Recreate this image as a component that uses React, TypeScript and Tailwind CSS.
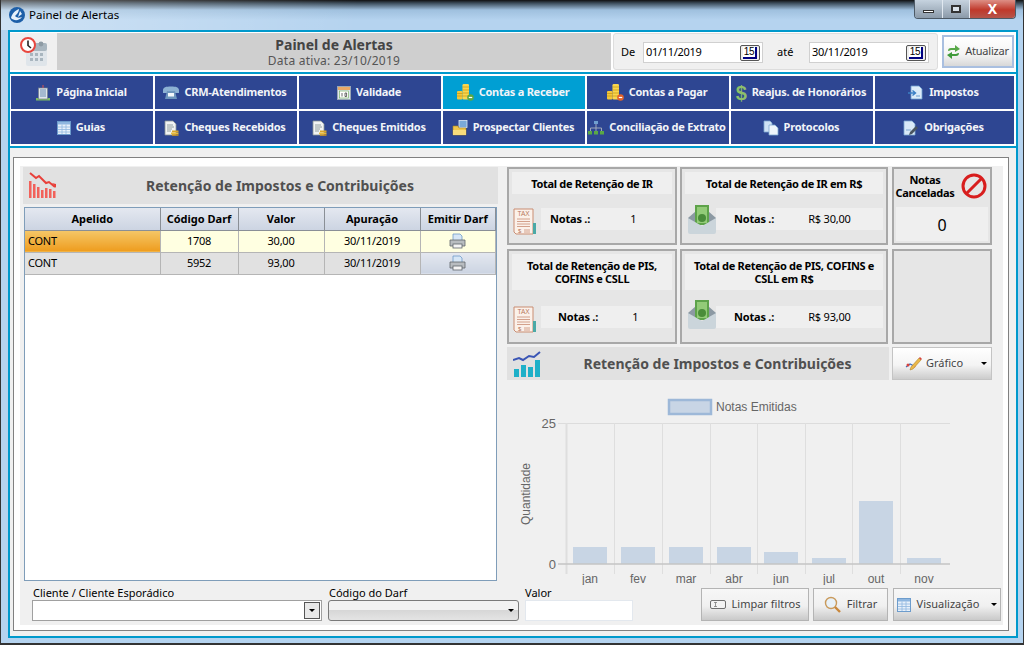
import type { ReactNode } from 'react'

type IconProps = { className?: string }

function AppLogo() {
  return (
    <svg width="18" height="18" viewBox="0 0 18 18">
      <circle cx="9" cy="9" r="8" fill="#1d5fa8" />
      <path d="M3 12c3 3 8 3 11-1-3 1-5 1-7-1 2-2 4-4 4-7C8 4 4 7 3 12z" fill="#e8f1fa" />
      <path d="M12 5l2 3-4 3z" fill="#e8f1fa" />
    </svg>
  )
}

function ClockCalendar() {
  return (
    <svg width="30" height="30" viewBox="0 0 30 30">
      <rect x="7" y="6" width="21" height="23" rx="2" fill="#dfe5ea" />
      <rect x="7" y="6" width="21" height="8" rx="2" fill="#a9b6bf" />
      <circle cx="22" cy="7" r="2.4" fill="#8e9ba4" />
      <g fill="#a9b6bf">
        <rect x="11" y="16" width="3" height="3" />
        <rect x="16" y="16" width="3" height="3" />
        <rect x="21" y="16" width="3" height="3" />
        <rect x="11" y="21" width="3" height="3" />
        <rect x="16" y="21" width="3" height="3" />
        <rect x="21" y="21" width="3" height="3" />
      </g>
      <circle cx="9" cy="8" r="7" fill="#fff" stroke="#e8473f" strokeWidth="2" />
      <path d="M9 3.5V8.5L12 11" fill="none" stroke="#222" strokeWidth="1.6" />
    </svg>
  )
}

function BuildingIcon() {
  return (
    <svg width="16" height="16" viewBox="0 0 16 16">
      <rect x="1" y="13" width="14" height="2.500" fill="#7dbb62" />
      <rect x="3.500" y="3" width="9" height="11" fill="#dfe5ea" stroke="#75808c" strokeWidth=".7" />
      <path d="M5 5h6M5 7h6M5 9h6M5 11h6" stroke="#6a8db5" strokeWidth="1" />
      <path d="M8 0v3" stroke="#d9534f" />
    </svg>
  )
}

function PhoneIcon() {
  return (
    <svg width="16" height="14" viewBox="0 0 16 14">
      <path d="M0 4.500C0 1 3 .5 8 .5s8 .5 8 4V7h-4V5H4v2H0z" fill="#8db1d3" />
      <path d="M2 13l2-8h8l2 8z" fill="#6f96bd" />
      <rect x="5" y="7" width="6" height="3.500" fill="#f4f8fb" />
    </svg>
  )
}

function CalendarIcon() {
  return (
    <svg width="14" height="14" viewBox="0 0 14 14">
      <rect x=".5" y=".5" width="13" height="13" fill="#dfe7ef" stroke="#9aa7b5" />
      <rect x="1" y="1" width="12" height="3" fill="#e9a866" />
      <rect x="2.500" y="5" width="9" height="7" fill="#fff" stroke="#6aa84f" strokeWidth=".6" />
      <path d="M5 7v3.500M8 7h1.600v3.500H8z" fill="none" stroke="#444" strokeWidth=".8" />
    </svg>
  )
}

function CoinsIcon({ badge }: { badge: string }) {
  return (
    <svg width="17" height="17" viewBox="0 0 17 17">
      <rect x="0" y="7" width="5.500" height="8.500" rx="1" fill="#f2c63a" />
      <rect x="5.500" y="0" width="6.500" height="15.500" rx="1.200" fill="#f8d64e" />
      <path d="M0 9.500h5.500M0 12h5.500M5.500 3h6.500M5.500 6h6.500M5.500 9h6.500M5.500 12h6.500" stroke="#c39516" strokeWidth=".7" />
      <circle cx="13.500" cy="13.500" r="3.300" fill={badge} />
      <path d="M11.800 13.500h3.400" stroke="#fff" strokeWidth="1.200" />
    </svg>
  )
}

function DocArrowIcon() {
  return (
    <svg width="16" height="15" viewBox="0 0 16 15">
      <path d="M3 1h8l3 3v10H3z" fill="#dcebf8" stroke="#6f9fd0" strokeWidth=".8" />
      <path d="M0 8h7M4.500 5.500L7.500 8l-3 2.500" fill="none" stroke="#3b7fc4" strokeWidth="1.400" />
      <path d="M8 11h4" stroke="#6f9fd0" />
    </svg>
  )
}

function GridIcon({ className }: IconProps) {
  return (
    <svg className={className} width="14" height="14" viewBox="0 0 14 14">
      <rect x=".5" y=".5" width="13" height="13" fill="#e8f1fa" stroke="#6d9ccc" />
      <rect x="1" y="1" width="12" height="2.500" fill="#8fb7e0" />
      <path d="M1 6h12M1 8.500h12M1 11h12M5 3.500V13M9 3.500V13" stroke="#8fb7e0" strokeWidth=".8" />
    </svg>
  )
}

function ChequeIcon() {
  return (
    <svg width="15" height="16" viewBox="0 0 15 16">
      <path d="M1 1h8l3 3v11H1z" fill="#f1f3f3" stroke="#8b9496" strokeWidth=".8" />
      <path d="M3 5h6M3 7h7M3 9h5M3 11h4" stroke="#7c8a8c" strokeWidth=".8" />
      <rect x="8" y="10.500" width="6.500" height="1.800" fill="#d9a52a" />
      <rect x="7" y="12.500" width="7.500" height="1.800" fill="#e9bb3c" />
      <rect x="8" y="14.300" width="6.500" height="1.500" fill="#c99320" />
    </svg>
  )
}

function FolderIcon() {
  return (
    <svg width="16" height="16" viewBox="0 0 16 16">
      <rect x="7" y="0.500" width="8" height="7" fill="#7aa9d8" stroke="#dce8f4" strokeWidth=".8" />
      <path d="M1 6h5l1 2h7v7H1z" fill="#f0c64a" stroke="#a9831f" strokeWidth=".6" />
      <path d="M1 10h13v5H1z" fill="#f8dc7b" />
    </svg>
  )
}

function TreeIcon() {
  return (
    <svg width="16" height="14" viewBox="0 0 16 14">
      <rect x="6" y="0" width="4" height="3" fill="#6f9fd0" />
      <path d="M8 3v4M2.500 10V7h11v3M8 7v3" fill="none" stroke="#aab2bc" strokeWidth=".9" />
      <rect x="0" y="10" width="4" height="3.500" fill="#5aa845" />
      <rect x="6" y="10" width="4" height="3.500" fill="#5aa845" />
      <rect x="12" y="10" width="4" height="3.500" fill="#5aa845" />
    </svg>
  )
}

function CopiesIcon() {
  return (
    <svg width="16" height="16" viewBox="0 0 16 16">
      <path d="M1 1h6l2 2v9H1z" fill="#cfe2f5" stroke="#7ea8d2" strokeWidth=".8" />
      <path d="M6 5h6l3 3v7H6z" fill="#eef5fc" stroke="#7ea8d2" strokeWidth=".8" />
    </svg>
  )
}

function DocPenIcon() {
  return (
    <svg width="16" height="16" viewBox="0 0 16 16">
      <path d="M1 1h8l3 3v11H1z" fill="#d9e9f8" stroke="#7ea8d2" strokeWidth=".8" />
      <path d="M3 10h5" stroke="#7ea8d2" />
      <path d="M6 15l1-3 6-6 2 2-6 6z" fill="#4a5560" />
    </svg>
  )
}

function RefreshArrows() {
  return (
    <svg width="13" height="14" viewBox="0 0 13 14">
      <path d="M1 6c0-2 1-3 3-3h4V0l5 4-5 3V5H5C4 5 3 5.500 1 6z" fill="#58a848" />
      <path d="M12 8c0 2-1 3-3 3H5v3L0 10l5-3v2h3c1 0 2-.5 4-1z" fill="#3f9a3a" />
    </svg>
  )
}

function TrendDownIcon() {
  return (
    <svg width="28" height="28" viewBox="0 0 28 28">
      <path d="M1 1l6 5 3-2 7 7 3-1 6 5" fill="none" stroke="#e8403a" strokeWidth="2" />
      <path d="M23 11l4 1v4z" fill="#e8403a" />
      <g fill="#f2615a">
        <rect x="0" y="9" width="2.500" height="17" />
        <rect x="4" y="12" width="2.500" height="14" />
        <rect x="8" y="15" width="2.500" height="11" />
        <rect x="12" y="18" width="2.500" height="8" />
        <rect x="16" y="16" width="2.500" height="10" />
        <rect x="20" y="17" width="2.500" height="9" />
        <rect x="24" y="19" width="2.500" height="7" />
      </g>
    </svg>
  )
}

function TrendUpIcon() {
  return (
    <svg width="28" height="26" viewBox="0 0 28 26">
      <path d="M0 9l6-2 4 2 6-4 5 1 6-5" fill="none" stroke="#3a55b5" strokeWidth="2" />
      <g fill="#1eb0c8">
        <rect x="1" y="18" width="5" height="8" />
        <rect x="8" y="14" width="5" height="12" />
        <rect x="15" y="16" width="5" height="10" />
        <rect x="22" y="9" width="5" height="17" />
      </g>
    </svg>
  )
}

function TaxDocIcon() {
  return (
    <svg width="24" height="28" viewBox="0 0 24 28">
      <path d="M1 1h19v25H3l-2-2z" fill="#fbf1ea" stroke="#c98d73" strokeWidth="1" />
      <rect x="20" y="15" width="3" height="11" fill="#4aa9a6" />
      <text x="10.500" y="8" textAnchor="middle" fontSize="6.500" fill="#b7765b" fontFamily="Liberation Sans">TAX</text>
      <path d="M4 11h13M4 13.500h13M4 16h13M4 18.500h13M11 22h6M11 24h6" stroke="#c98d73" strokeWidth=".8" />
      <text x="5" y="25" fontSize="6" fill="#b7765b" fontFamily="Liberation Sans">$</text>
    </svg>
  )
}

function MoneyEnvelopeIcon() {
  return (
    <svg width="28" height="29" viewBox="0 0 28 29">
      <path d="M0 13L8 6h12l8 7v6H0z" fill="#8c99a3" />
      <rect x="7" y="0" width="14" height="20" fill="#5ea34a" />
      <rect x="9" y="2" width="10" height="16" fill="#93cb78" />
      <circle cx="14" cy="13" r="4" fill="#4a8c3a" />
      <path d="M0 13l14 8 14-8v14a2 2 0 0 1-2 2H2a2 2 0 0 1-2-2z" fill="#cbd5db" />
    </svg>
  )
}

function ForbiddenIcon() {
  return (
    <svg width="26" height="26" viewBox="0 0 26 26">
      <circle cx="13" cy="13" r="11" fill="none" stroke="#d81e1e" strokeWidth="3" />
      <path d="M5.500 20.500L20.500 5.500" stroke="#d81e1e" strokeWidth="3" />
    </svg>
  )
}

function PrinterIcon() {
  return (
    <svg width="17" height="16" viewBox="0 0 17 16">
      <path d="M4 1h7l2 2v5H4z" fill="#d6e6f6" stroke="#6f9bc8" strokeWidth=".8" />
      <path d="M1 7h15v6H1z" fill="#b8bcc0" stroke="#5f656b" strokeWidth=".8" />
      <rect x="4" y="11" width="9" height="4" fill="#f4f4f4" stroke="#5f656b" strokeWidth=".8" />
    </svg>
  )
}

function PencilChartIcon() {
  return (
    <svg width="18" height="17" viewBox="0 0 18 17">
      <path d="M1 12l4-3 4 2 6-7" fill="none" stroke="#3a6cc0" strokeWidth="1.200" />
      <circle cx="3" cy="10" r="1.500" fill="#d9413b" />
      <circle cx="9" cy="11" r="1.500" fill="#d9413b" />
      <path d="M5 15l1-3 8-9 2 2-8 9z" fill="#eab84a" stroke="#a87a1c" strokeWidth=".5" />
      <path d="M14 3l1-1 2 2-1 1z" fill="#d9413b" />
    </svg>
  )
}

function EraserIcon() {
  return (
    <svg width="16" height="10" viewBox="0 0 16 10">
      <rect x=".5" y=".5" width="15" height="8" rx="1.500" fill="#f3f3f3" stroke="#6f6f6f" />
      <path d="M4 2.500h3M5.500 2.500v4M4 6.500h3" stroke="#6f6f6f" strokeWidth=".7" />
    </svg>
  )
}

function MagnifierIcon() {
  return (
    <svg width="17" height="17" viewBox="0 0 17 17">
      <circle cx="7" cy="7" r="5.500" fill="#e8f1f8" stroke="#c99a5b" strokeWidth="1.400" />
      <path d="M11 11l5 5" stroke="#c9873b" strokeWidth="2.400" />
    </svg>
  )
}

function Caret({ className = '' }: IconProps) {
  return <span className={`inline-block h-0 w-0 border-x-[3px] border-t-[3px] border-x-transparent border-t-black ${className}`} />
}

function CalendarButton() {
  return (
    <span className="flex h-[16px] w-[20px] items-center justify-center rounded-[2px] border border-[#555] bg-[#eeeeee]">
      <span className="flex h-[12px] w-[14px] items-center justify-center border-r-2 border-b-2 border-[#000080] bg-white font-['Liberation_Sans',sans-serif] text-[10px] leading-none text-black">15</span>
    </span>
  )
}

function DateField({ value }: { value: string }) {
  return (
    <div className="flex h-[21px] w-[120px] items-center justify-between border border-[#d0d0d0] bg-white px-[2px] text-[11px] tracking-[-0.3px] text-black">
      {value}
      <CalendarButton />
    </div>
  )
}

const navRows = [
  [
    { label: 'Página Inicial', icon: <BuildingIcon /> },
    { label: 'CRM-Atendimentos', icon: <PhoneIcon /> },
    { label: 'Validade', icon: <CalendarIcon /> },
    { label: 'Contas a Receber', icon: <CoinsIcon badge="#5aa845" />, active: true },
    { label: 'Contas a Pagar', icon: <CoinsIcon badge="#e2622b" /> },
    { label: 'Reajus. de Honorários', icon: <span className="font-['Liberation_Sans',sans-serif] text-[20px] leading-none font-bold text-[#8dbf6a]">$</span> },
    { label: 'Impostos', icon: <DocArrowIcon /> },
  ],
  [
    { label: 'Guias', icon: <GridIcon /> },
    { label: 'Cheques Recebidos', icon: <ChequeIcon /> },
    { label: 'Cheques Emitidos', icon: <ChequeIcon /> },
    { label: 'Prospectar Clientes', icon: <FolderIcon /> },
    { label: 'Conciliação de Extrato', icon: <TreeIcon /> },
    { label: 'Protocolos', icon: <CopiesIcon /> },
    { label: 'Obrigações', icon: <DocPenIcon /> },
  ],
]

function Nav() {
  return (
    <div className="ml-px grid grid-cols-[142px_142px_142px_142px_142px_142px_139px] gap-[2px]">
      {navRows.flat().map((item) => (
        <div
          key={item.label}
          className={`flex h-[33px] items-center justify-center gap-[5px] pr-[2px] text-[11px] font-bold tracking-[-0.25px] whitespace-nowrap text-[#f2f4f8] ${'active' in item ? 'bg-[#009fd3]' : 'bg-[#2e4692]'}`}
        >
          {item.icon}
          {item.label}
        </div>
      ))}
    </div>
  )
}

function Header() {
  return (
    <div className="flex h-[37px] items-stretch">
      <div className="flex w-[47px] items-center justify-center bg-[#f0f0f0]">
        <ClockCalendar />
      </div>
      <div className="flex w-[554px] flex-col items-center justify-center bg-[#cfcfcf] text-[#444]">
        <div className="text-[14px] leading-[17px] font-bold">Painel de Alertas</div>
        <div className="text-[12px] leading-[15px] tracking-[0.25px] text-[#555]">Data ativa: 23/10/2019</div>
      </div>
      <div className="ml-[2px] flex w-[325px] items-center rounded-[3px] border border-[#dddddd] bg-[#f0f0f0] pt-[2px] pl-[7px] text-[11px] text-black">
        <span className="w-[22px]">De</span>
        <DateField value="01/11/2019" />
        <span className="w-[46px] pl-[14px]">até</span>
        <DateField value="30/11/2019" />
      </div>
      <div className="ml-[4px] flex h-[33px] w-[72px] items-center justify-center gap-[5px] self-center border-2 border-[#a9bfe0] bg-[linear-gradient(#ffffff,#f4f4f4_60%,#d8d8d8)] text-[11px] tracking-[-0.2px] text-[#444]">
        <RefreshArrows />
        Atualizar
      </div>
    </div>
  )
}

function SectionTitle({ icon, title, className }: { icon: ReactNode; title: string; className: string }) {
  return (
    <div className={`relative flex items-center justify-center bg-[#e1e1e1] pl-[39px] text-[14px] font-bold text-[#505050] ${className}`}>
      <span className="absolute top-1/2 left-[6px] -translate-y-1/2">{icon}</span>
      {title}
    </div>
  )
}

const tableRows = [
  { apelido: 'CONT', codigo: '1708', valor: '30,00', apuracao: '30/11/2019', selected: true },
  { apelido: 'CONT', codigo: '5952', valor: '93,00', apuracao: '30/11/2019', selected: false },
]

function DarfTable() {
  const head = 'border-r border-b border-[#8a8f96] text-center font-bold text-black'
  const cell = 'border-r border-b border-[#b5b5b5] text-center tracking-[-0.25px] text-black'
  return (
    <div className="mx-px mt-[3px] h-[374px] border border-[#7f9db9] bg-white text-[11px]">
      <table className="w-full table-fixed border-collapse">
        <colgroup>
          <col className="w-[135px]" />
          <col className="w-[78px]" />
          <col className="w-[86px]" />
          <col className="w-[96px]" />
          <col />
        </colgroup>
        <thead>
          <tr className="h-[22px] bg-[linear-gradient(#e4e8f0,#ccd4e2)]">
            {['Apelido', 'Código Darf', 'Valor', 'Apuração', 'Emitir Darf'].map((h) => (
              <th key={h} className={head}>{h}</th>
            ))}
          </tr>
        </thead>
        <tbody>
          {tableRows.map((row) => (
            <tr key={row.codigo} className={`h-[22px] ${row.selected ? 'bg-[#ffffe1]' : 'bg-[#e1e1e1]'}`}>
              <td className={`${cell} pl-[3px] !text-left ${row.selected ? 'bg-[linear-gradient(#f5c768,#ee9c1e)]' : ''}`}>{row.apelido}</td>
              <td className={cell}>{row.codigo}</td>
              <td className={cell}>{row.valor}</td>
              <td className={cell}>{row.apuracao}</td>
              <td className={`${cell} ${row.selected ? '' : 'bg-[linear-gradient(#e4e8f0,#ccd4e2)]'}`}>
                <span className="flex justify-center"><PrinterIcon /></span>
              </td>
            </tr>
          ))}
        </tbody>
      </table>
    </div>
  )
}

function StatCard({ title, icon, value, labelPad, valueGap, wide, tall }: {
  title: ReactNode
  icon: ReactNode
  value: string
  labelPad: number
  valueGap: number
  wide?: boolean
  tall?: boolean
}) {
  return (
    <div className={`flex flex-col border-2 border-[#a8a8a8] bg-[#e6e6e6] p-[3px] ${wide ? 'w-[208px]' : 'w-[170px]'}`}>
      <div className={`flex items-center justify-center bg-[#efefef] text-center text-[11px] leading-[13px] font-bold tracking-[-0.3px] text-black ${tall ? 'h-[36px]' : 'h-[22px]'}`}>
        {title}
      </div>
      <div className={`flex items-start ${tall ? 'mt-[16px]' : 'mt-[14px]'} ${wide ? 'pl-[3px]' : 'pl-[1px]'}`}>
        <span className={`w-[28px] shrink-0 ${wide ? (tall ? '-mt-[6px]' : '-mt-[3px]') : ''}`}>{icon}</span>
        <div
          className="flex h-[22px] flex-1 items-center bg-[#efefef] text-[11px] tracking-[-0.2px] text-black"
          style={{ paddingLeft: labelPad, gap: valueGap }}
        >
          <b>Notas .:</b>
          <span>{value}</span>
        </div>
      </div>
    </div>
  )
}

function Cards() {
  return (
    <div className="flex flex-col gap-[4px]">
      <div className="flex h-[78px] gap-[3px]">
        <StatCard title="Total de Retenção de IR" icon={<TaxDocIcon />} value="1" labelPad={9} valueGap={40} />
        <StatCard wide title="Total de Retenção de IR em R$" icon={<MoneyEnvelopeIcon />} value="R$ 30,00" labelPad={18} valueGap={34} />
        <div className="ml-px flex w-[100px] flex-col border-2 border-[#a8a8a8] bg-[#e6e6e6] p-[2px]">
          <div className="flex items-center pt-[2px]">
            <div className="-ml-[2px] mr-[5px] w-[62px] text-center text-[11px] leading-[13px] font-bold tracking-[-0.3px] text-black">Notas Canceladas</div>
            <ForbiddenIcon />
          </div>
          <div className="mt-[8px] flex h-[35px] items-center justify-center bg-[#efefef] pt-[2px] text-[16px] text-black">0</div>
        </div>
      </div>
      <div className="flex h-[95px] gap-[3px]">
        <StatCard tall title={<>Total de Retenção de PIS,<br />COFINS e CSLL</>} icon={<TaxDocIcon />} value="1" labelPad={17} valueGap={34} />
        <StatCard tall wide title={<>Total de Retenção de PIS, COFINS e<br />CSLL em R$</>} icon={<MoneyEnvelopeIcon />} value="R$ 93,00" labelPad={18} valueGap={34} />
        <div className="ml-px w-[100px] border-2 border-[#a8a8a8] bg-[#e6e6e6]" />
      </div>
    </div>
  )
}

const bars = [
  { label: 'jan', x: 573, top: 547 },
  { label: 'fev', x: 621, top: 547 },
  { label: 'mar', x: 669, top: 547 },
  { label: 'abr', x: 717, top: 547 },
  { label: 'jun', x: 764, top: 552 },
  { label: 'jul', x: 812, top: 558 },
  { label: 'out', x: 859, top: 501 },
  { label: 'nov', x: 907, top: 558 },
]

function Chart() {
  return (
    <svg className="mt-[10px] block" width="485" height="195" viewBox="507 390 485 195" fontFamily="Liberation Sans" fontSize="12" fill="#666">
      <rect x="669" y="400" width="42" height="14" fill="#c8d5e5" stroke="#9db8d8" strokeWidth="2.500" />
      <text x="716" y="411">Notas Emitidas</text>
      <text x="556" y="428" textAnchor="end" fontSize="13">25</text>
      <text x="556" y="569" textAnchor="end" fontSize="13">0</text>
      <text transform="translate(530 494) rotate(-90)" textAnchor="middle">Quantidade</text>
      <path d="M558 423.500H950" stroke="#dcdcdc" />
      {bars.map((bar) => (
        <g key={bar.label}>
          <path d={`M${bar.x - 7}.5 423V574`} stroke="#dedede" strokeWidth={bar.x === 573 ? 2 : 1} />
          <rect x={bar.x} y={bar.top} width="34" height={564 - bar.top} fill="#c8d5e4" />
          <text x={bar.x + 17} y="583" textAnchor="middle">{bar.label}</text>
        </g>
      ))}
      <path d="M558 564H950" stroke="#c4c4c4" strokeWidth="1.500" />
    </svg>
  )
}

function ActionButton({ icon, label, caret, className }: { icon: ReactNode; label: string; caret?: boolean; className: string }) {
  return (
    <div className={`relative flex h-[33px] items-center justify-center gap-[6px] border border-[#b4b4b4] bg-[linear-gradient(#f7f7f7,#f0f0f0_55%,#c9c9c9)] text-[11px] text-[#444] ${className}`}>
      {icon}
      {label}
      {caret && <Caret className="ml-[6px]" />}
    </div>
  )
}

function Filters() {
  return (
    <div className="flex items-end pr-[2px] pl-[9px] text-[11px] text-black">
      <div className="w-[296px]">
        <div className="mb-px pl-px leading-[13px]">Cliente / Cliente Esporádico</div>
        <div className="flex h-[21px] w-[290px] items-center justify-end border border-[#a0a0a0] bg-white pr-[1px]">
          <span className="flex h-[17px] w-[16px] items-center justify-center border border-[#555] bg-[#e8e8e8]"><Caret /></span>
        </div>
      </div>
      <div className="w-[197px]">
        <div className="mb-px pl-px leading-[13px]">Código do Darf</div>
        <div className="flex h-[21px] w-[191px] items-center justify-end rounded-[3px] border border-[#7a7a7a] bg-[linear-gradient(#f2f2f2_45%,#d6d6d6_46%,#e4e4e4)] pr-[4px]">
          <Caret />
        </div>
      </div>
      <div className="w-[176px]">
        <div className="mb-px leading-[13px]">Valor</div>
        <div className="h-[21px] w-[108px] border border-[#e3e8ee] bg-white" />
      </div>
      <div className="flex gap-[4px]">
        <ActionButton className="w-[108px]" icon={<EraserIcon />} label="Limpar filtros" />
        <ActionButton className="w-[75px]" icon={<MagnifierIcon />} label="Filtrar" />
        <ActionButton className="ml-px w-[108px]" icon={<GridIcon />} label="Visualização" caret />
      </div>
    </div>
  )
}

function WindowControls() {
  return (
    <div className="flex h-[19px] self-start overflow-hidden rounded-b-[4px] border border-t-0 border-[#4d5a66]">
      <span className="flex w-[28px] items-center justify-center border-r border-[#e0e8f0] bg-[linear-gradient(#c6d3df,#8b9aa9)]">
        <span className="mt-[5px] h-[3px] w-[11px] border border-[#333] bg-white" />
      </span>
      <span className="flex w-[27px] items-center justify-center border-r border-[#e0e8f0] bg-[linear-gradient(#c6d3df,#8b9aa9)]">
        <span className="h-[8px] w-[10px] border-2 border-[#333] bg-[#dbe3ea]" />
      </span>
      <span className="flex w-[45px] items-center justify-center bg-[linear-gradient(#dd8f85,#c0392b_55%,#b5554a)] text-[14px] leading-none font-bold text-white">X</span>
    </div>
  )
}

export default function App() {
  return (
    <div className="flex h-[645px] w-[1024px] flex-col overflow-hidden border-x border-b-2 border-[#333] bg-[linear-gradient(#101010,#3a4a58_3px,#9fc0de_10px,#b5d3ef_20px)] font-['Noto_Sans',sans-serif]">
      <div className="flex h-[30px] shrink-0 items-start bg-[linear-gradient(90deg,rgba(255,255,255,0.35),rgba(255,255,255,0)_35%)] pr-[7px] pl-[7px]">
        <div className="mt-[6px] flex items-center gap-[3px] text-[11.5px] leading-[18px] text-black">
          <AppLogo />
          Painel de Alertas
        </div>
        <div className="ml-auto">
          <WindowControls />
        </div>
      </div>

      <div className="ml-[7px] flex h-[608px] w-[1010px] flex-col border-2 border-[#0099cc] bg-white">
        <div className="pt-px">
          <Header />
        </div>
        <div className="mt-[2px] h-[2px] bg-[#0099cc]" />
        <div className="mt-[2px]">
          <Nav />
        </div>
        <div className="mt-[2px] h-[2px] bg-[#0099cc]" />

        <div className="flex-1 bg-[#f0f0f0] pt-[9px] pr-[7px] pl-[3px]">
          <div className="h-[474px] border border-[#808080] bg-white pt-[8px] pr-[5px] pb-[5px] pl-[6px]">
            <div className="flex h-full flex-col bg-[#f0f0f0] pt-px pl-[3px]">
              <div className="flex h-[419px] gap-[9px]">
                <div className="w-[475px]">
                  <SectionTitle className="h-[37px]" icon={<TrendDownIcon />} title="Retenção de Impostos e Contribuições" />
                  <DarfTable />
                </div>
                <div className="w-[485px]">
                  <Cards />
                  <div className="mt-[3px] flex h-[33px] gap-[3px]">
                    <SectionTitle className="w-[382px]" icon={<TrendUpIcon />} title="Retenção de Impostos e Contribuições" />
                    <div className="flex w-[100px] items-center gap-[3px] border border-[#c4c4c4] bg-[linear-gradient(#ffffff,#f4f4f4_55%,#cccccc)] pr-[4px] pl-[12px] text-[11px] text-[#444]">
                      <PencilChartIcon />
                      Gráfico
                      <Caret className="ml-auto" />
                    </div>
                  </div>
                  <Chart />
                </div>
              </div>
              <Filters />
            </div>
          </div>
        </div>
      </div>
    </div>
  )
}
